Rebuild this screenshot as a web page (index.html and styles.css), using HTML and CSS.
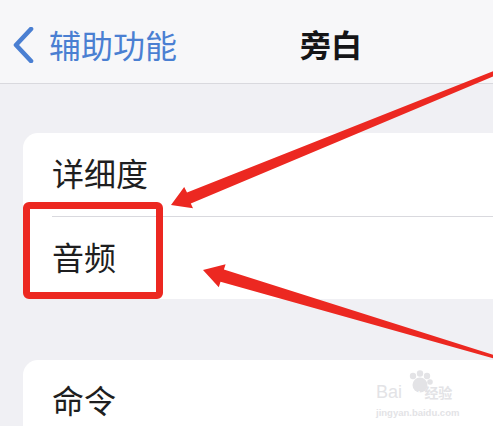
FILE: index.html
```html
<!DOCTYPE html>
<html lang="zh">
<head>
    <meta charset="UTF-8">
    <title>旁白</title>
    <link rel="stylesheet" href="styles.css">
</head>
<body>

    <header class="navbar">
        <a class="back">
            <svg class="chevron" width="22" height="36" viewBox="0 0 22 36">
                <path d="M19 2 L4 18 L19 34" fill="none" stroke="currentColor" stroke-width="4.6" stroke-linecap="round" stroke-linejoin="round"/>
            </svg>
            <span>辅助功能</span>
        </a>
        <h1 class="title">旁白</h1>
    </header>

    <section class="group first">
        <div class="row">详细度</div>
        <div class="row">音频</div>
    </section>

    <section class="group second">
        <div class="row">命令</div>
    </section>

    <div class="highlight"></div>

    <svg class="arrows" width="493" height="426" viewBox="0 0 493 426">
        <polygon points="171,205 184.2,187.1 187,192.5 494.2,70.8 495.8,75.4 190.8,203.5 193,208.3" />
        <polygon points="203,270 225.6,264.2 223.9,269.5 495.4,355.4 494.6,358.6 220.5,281.8 218.8,287.2" />
    </svg>

    <div class="watermark">
        <svg class="paw" width="30" height="24" viewBox="0 0 30 24">
            <circle cx="9" cy="6" r="3.2" />
            <circle cx="16" cy="3.5" r="3.2" />
            <circle cx="23" cy="6" r="3.2" />
            <circle cx="26" cy="12" r="2.8" />
            <circle cx="16" cy="15" r="7.5" />
        </svg>
        <div class="mark-line">
            <span class="bai">Bai</span><span class="du">du</span><span class="jy">经验</span>
        </div>
        <div class="mark-url">jingyan.baidu.com</div>
    </div>

</body>
</html>
```

FILE: styles.css
```css
* {
    box-sizing: border-box;
}

:root {
    --fondo: #f0f0f4;
    --barra: #f7f7f9;
    --linea: #d9d9de;
    --azul: #4a7fd2;
    --texto: #1e1e20;
    --rojo: #ec2821;
    --marca: #e3e3e6;
}

body {
    margin: 0;
    width: 493px;
    height: 426px;
    overflow: hidden;
    position: relative;
    background-color: var(--fondo);
    font-family: "Noto Sans CJK SC", "Noto Sans", sans-serif;
    color: var(--texto);
}

.navbar {
    height: 84px;
    padding-top: 4px;
    background-color: var(--barra);
    border-bottom: 1px solid var(--linea);
    display: flex;
    align-items: center;
}

.back {
    display: flex;
    align-items: center;
    gap: 15px;
    padding-left: 12px;
    width: 300px;
    color: var(--azul);
    font-size: 32px;
}

.chevron {
    display: block;
    margin-top: 2px;
}

.title {
    margin: 0;
    font-size: 31px;
    font-weight: 700;
    color: #151517;
}

.group {
    margin-left: 23px;
    background-color: #fff;
    border-radius: 15px 0 0 15px;
}

.group.first {
    margin-top: 49px;
}

.group.second {
    margin-top: 61px;
}

.row {
    margin-left: 29px;
    height: 83px;
    padding-bottom: 5px;
    display: flex;
    align-items: center;
    font-size: 32px;
}

.row + .row {
    border-top: 1px solid var(--linea);
}

.highlight {
    position: absolute;
    left: 23px;
    top: 202px;
    width: 140px;
    height: 97px;
    border: 7px solid var(--rojo);
    border-radius: 6px;
}

.arrows {
    position: absolute;
    left: 0;
    top: 0;
    fill: var(--rojo);
}

.watermark {
    position: absolute;
    left: 376px;
    top: 370px;
    width: 92px;
    color: var(--marca);
    font-family: "Liberation Sans", sans-serif;
}

.paw {
    position: absolute;
    left: 28px;
    top: 0;
    fill: var(--marca);
}

.mark-line {
    position: relative;
    padding-top: 13px;
    display: flex;
    align-items: baseline;
    font-size: 18px;
    line-height: 18px;
}

.du {
    color: #fff;
    font-size: 12px;
    margin: 0 4px 0 5px;
}

.jy {
    font-family: "Noto Sans CJK SC", sans-serif;
    font-size: 14px;
    font-weight: 700;
}

.mark-url {
    font-size: 9.5px;
    font-weight: 700;
    margin-top: 4px;
}
```
